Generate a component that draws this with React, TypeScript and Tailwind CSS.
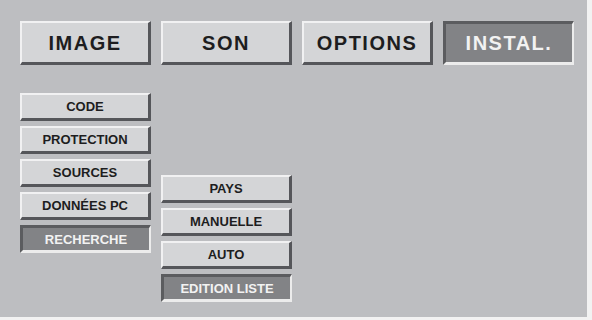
import React from "react"

const topTabs = [
  { label: "IMAGE", active: false },
  { label: "SON", active: false },
  { label: "OPTIONS", active: false },
  { label: "INSTAL.", active: true },
]

const leftItems = [
  { label: "CODE", active: false },
  { label: "PROTECTION", active: false },
  { label: "SOURCES", active: false },
  { label: "DONNÉES PC", active: false },
  { label: "RECHERCHE", active: true },
]

const subItems = [
  { label: "PAYS", active: false },
  { label: "MANUELLE", active: false },
  { label: "AUTO", active: false },
  { label: "EDITION LISTE", active: true },
]

function BevelButton({ label, active, big }: { label: string; active: boolean; big?: boolean }) {
  const size = big
    ? "h-[44px] text-[20px] tracking-[1.5px]"
    : "h-[28px] text-[13px]"
  const look = active
    ? "bg-[#828386] text-[#f2f2f2] border-t-[3px] border-l-[3px] border-b-[3px] border-r-[2px] border-t-[#5b5c5f] border-l-[#5b5c5f] border-b-[#ececec] border-r-[#ececec]"
    : "bg-[#d4d5d7] text-[#1d1d20] border-t-[2px] border-l-[2px] border-b-[3px] border-r-[3px] border-t-[#f1f1f2] border-l-[#f1f1f2] border-b-[#55565a] border-r-[#55565a]"
  return (
    <div className={`flex w-[131px] items-center justify-center font-bold leading-none ${size} ${look}`}>
      {label}
    </div>
  )
}

export default function App() {
  return (
    <div className="h-[320px] w-[592px] bg-[#f2f2f2]" style={{ fontFamily: '"Liberation Sans", Arial, sans-serif' }}>
      <div className="h-[317px] w-[587px] bg-[#bdbec1] pl-[20px] pt-[21px]">
        <div className="flex gap-[10px]">
          {topTabs.map((t) => (
            <BevelButton key={t.label} label={t.label} active={t.active} big />
          ))}
        </div>

        <div className="mt-[28px] flex gap-[10px]">
          <div className="flex flex-col gap-[5px]">
            {leftItems.map((t) => (
              <BevelButton key={t.label} label={t.label} active={t.active} />
            ))}
          </div>
          <div className="mt-[82px] flex flex-col gap-[5px]">
            {subItems.map((t) => (
              <BevelButton key={t.label} label={t.label} active={t.active} />
            ))}
          </div>
        </div>
      </div>
    </div>
  )
}
